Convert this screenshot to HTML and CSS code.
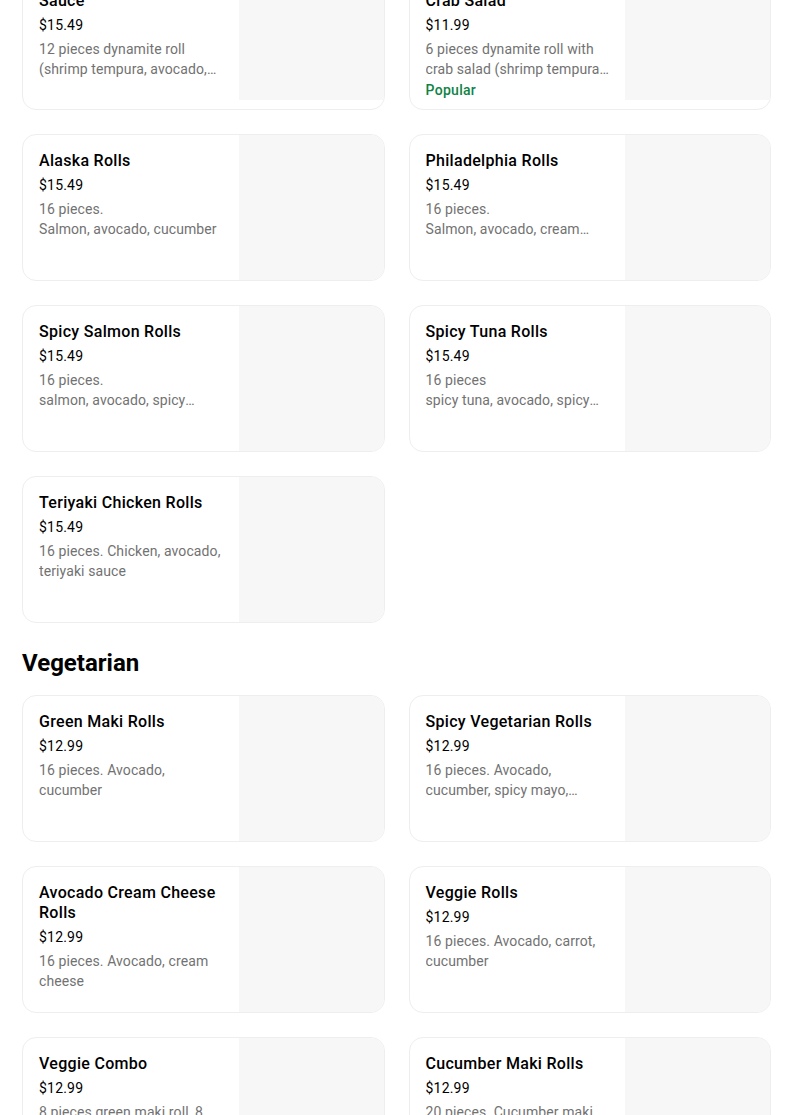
FILE: index.html
```html
<!DOCTYPE html>
<html lang="en">
<head>
<meta charset="utf-8">
<title>Menu</title>
<link rel="stylesheet" href="styles.css">
</head>
<body>
<main class="page">
  <section class="section first">
    <div class="grid">
      <div class="card">
        <div class="info">
          <div class="title">Dynamite Rolls with Sauce</div>
          <div class="price">$15.49</div>
          <div class="desc">12 pieces dynamite roll (shrimp tempura, avocado, cucumber, tobiko)</div>
        </div>
        <div class="thumb"></div>
      </div>
      <div class="card">
        <div class="info">
          <div class="title">Dynamite Roll with Crab&nbsp;Salad</div>
          <div class="price">$11.99</div>
          <div class="desc">6 pieces dynamite roll with crab salad (shrimp tempura, avocado, cucumber)</div>
          <div class="tag">Popular</div>
        </div>
        <div class="thumb"></div>
      </div>
      <div class="card">
        <div class="info">
          <div class="title">Alaska Rolls</div>
          <div class="price">$15.49</div>
          <div class="desc">16 pieces.<br>Salmon, avocado, cucumber</div>
        </div>
        <div class="thumb"></div>
      </div>
      <div class="card">
        <div class="info">
          <div class="title">Philadelphia Rolls</div>
          <div class="price">$15.49</div>
          <div class="desc">16 pieces.<br>Salmon, avocado, cream cheese</div>
        </div>
        <div class="thumb"></div>
      </div>
      <div class="card">
        <div class="info">
          <div class="title">Spicy Salmon Rolls</div>
          <div class="price">$15.49</div>
          <div class="desc">16 pieces.<br>salmon, avocado, spicy mayo, cucumber</div>
        </div>
        <div class="thumb"></div>
      </div>
      <div class="card">
        <div class="info">
          <div class="title">Spicy Tuna Rolls</div>
          <div class="price">$15.49</div>
          <div class="desc">16 pieces<br>spicy tuna, avocado, spicy mayo</div>
        </div>
        <div class="thumb"></div>
      </div>
      <div class="card">
        <div class="info">
          <div class="title">Teriyaki Chicken Rolls</div>
          <div class="price">$15.49</div>
          <div class="desc">16 pieces. Chicken, avocado, teriyaki sauce</div>
        </div>
        <div class="thumb"></div>
      </div>
    </div>
  </section>

  <section class="section">
    <h2 class="heading">Vegetarian</h2>
    <div class="grid">
      <div class="card">
        <div class="info">
          <div class="title">Green Maki Rolls</div>
          <div class="price">$12.99</div>
          <div class="desc">16 pieces. Avocado, cucumber</div>
        </div>
        <div class="thumb"></div>
      </div>
      <div class="card">
        <div class="info">
          <div class="title">Spicy Vegetarian Rolls</div>
          <div class="price">$12.99</div>
          <div class="desc">16 pieces. Avocado, cucumber, spicy mayo, tempura flakes</div>
        </div>
        <div class="thumb"></div>
      </div>
      <div class="card">
        <div class="info">
          <div class="title">Avocado Cream Cheese Rolls</div>
          <div class="price">$12.99</div>
          <div class="desc">16 pieces. Avocado, cream cheese</div>
        </div>
        <div class="thumb"></div>
      </div>
      <div class="card">
        <div class="info">
          <div class="title">Veggie Rolls</div>
          <div class="price">$12.99</div>
          <div class="desc">16 pieces. Avocado, carrot, cucumber</div>
        </div>
        <div class="thumb"></div>
      </div>
      <div class="card">
        <div class="info">
          <div class="title">Veggie Combo</div>
          <div class="price">$12.99</div>
          <div class="desc">8 pieces green maki roll, 8 pieces veggie roll</div>
        </div>
        <div class="thumb"></div>
      </div>
      <div class="card">
        <div class="info">
          <div class="title">Cucumber Maki Rolls</div>
          <div class="price">$12.99</div>
          <div class="desc">20 pieces. Cucumber maki rolls</div>
        </div>
        <div class="thumb"></div>
      </div>
    </div>
  </section>
</main>
</body>
</html>
```

FILE: styles.css
```css
html, body {
  margin: 0;
  padding: 0;
  background: #ffffff;
}

body {
  font-family: "Roboto", "Liberation Sans", sans-serif;
  color: #000000;
  -webkit-font-smoothing: antialiased;
}

.page {
  width: 749px;
  padding-left: 22px;
  margin-top: -46px;
}

.section + .section {
  margin-top: 26px;
}

.heading {
  margin: 0 0 18px;
  font-size: 24px;
  line-height: 28px;
  font-weight: 700;
  letter-spacing: 0;
  color: #000000;
}

.grid {
  display: grid;
  grid-template-columns: 1fr 1fr;
  column-gap: 24px;
  row-gap: 24px;
}

.card {
  display: flex;
  border: 1px solid #eeeeee;
  border-radius: 14px;
  overflow: hidden;
  background: #ffffff;
  min-height: 145px;
}

.info {
  flex: 1 1 auto;
  min-width: 0;
  padding: 16px 16px 9px;
}

.thumb {
  flex: 0 0 145px;
  height: 145px;
  background: #f7f7f7;
}

.title {
  font-size: 16px;
  line-height: 20px;
  font-weight: 500;
  letter-spacing: 0.3px;
  color: #000000;
}

.price {
  margin-top: 4px;
  font-size: 14px;
  line-height: 20px;
  letter-spacing: 0.2px;
  color: #000000;
}

.desc {
  margin-top: 4px;
  font-size: 14px;
  line-height: 20px;
  letter-spacing: 0.1px;
  color: #727272;
  display: -webkit-box;
  -webkit-box-orient: vertical;
  -webkit-line-clamp: 2;
  overflow: hidden;
}

.tag {
  margin-top: 1px;
  font-size: 14px;
  line-height: 20px;
  font-weight: 500;
  letter-spacing: 0.3px;
  color: #0e8345;
}
```
